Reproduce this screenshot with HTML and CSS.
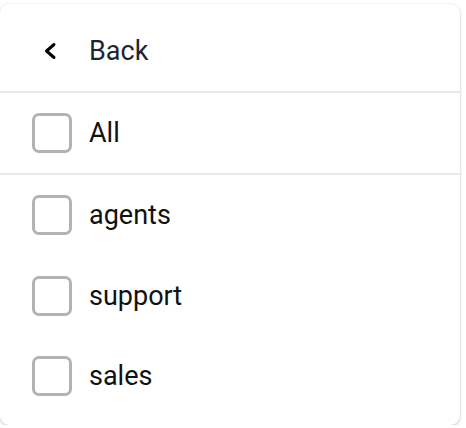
FILE: index.html
```html
<!DOCTYPE html>
<html>

<head>
    <title>Filter</title>
    <link rel="stylesheet" href="styles.css">
</head>

<body>
    <div class="menu">
        <div class="menu-head">
            <span class="back-icon">
                <svg width="16" height="20" viewBox="0 0 16 20">
                    <path d="M12 3.5 L4.5 10 L12 16.5" fill="none" stroke="#000" stroke-width="3" stroke-linecap="round" stroke-linejoin="round" />
                </svg>
            </span>
            <span class="back-label">Back</span>
        </div>

        <!-- select all -->
        <label class="opt opt-all">
            <span class="box"></span>
            <span class="opt-label">All</span>
        </label>

        <div class="opt-list">
            <label class="opt">
                <span class="box"></span>
                <span class="opt-label">agents</span>
            </label>
            <label class="opt">
                <span class="box"></span>
                <span class="opt-label">support</span>
            </label>
            <label class="opt">
                <span class="box"></span>
                <span class="opt-label">sales</span>
            </label>
        </div>
    </div>
</body>

</html>
```
FILE: styles.css
```css
body {
    margin: 0;
    background: #fff;
    font-family: Roboto, "Liberation Sans", sans-serif;
}

.menu {
    width: 460px;
    height: 421px;
    margin-top: 4px;
    box-sizing: border-box;
    background: #fff;
    border-radius: 9px;
    box-shadow: 0 1px 3px rgba(0, 0, 0, 0.22), 0 0 2px rgba(0, 0, 0, 0.06);
}

.menu-head {
    display: flex;
    align-items: center;
    height: 89px;
    padding: 7px 0 0 42px;
    box-sizing: border-box;
    border-bottom: 2px solid #e9e9e9;
}

.back-icon {
    display: flex;
    width: 16px;
    margin-right: 31px;
}

.back-label {
    font-size: 27px;
    color: #1f2530;
}

.opt {
    display: flex;
    align-items: center;
    height: 80.5px;
    padding-left: 32px;
    font-size: 27px;
    color: #111;
}

.opt-all {
    height: 80px;
    border-bottom: 2px solid #e9e9e9;
}

.box {
    width: 40px;
    height: 40px;
    box-sizing: border-box;
    border: 3px solid #b1b3b7;
    border-radius: 7px;
    margin-right: 17px;
}
```
